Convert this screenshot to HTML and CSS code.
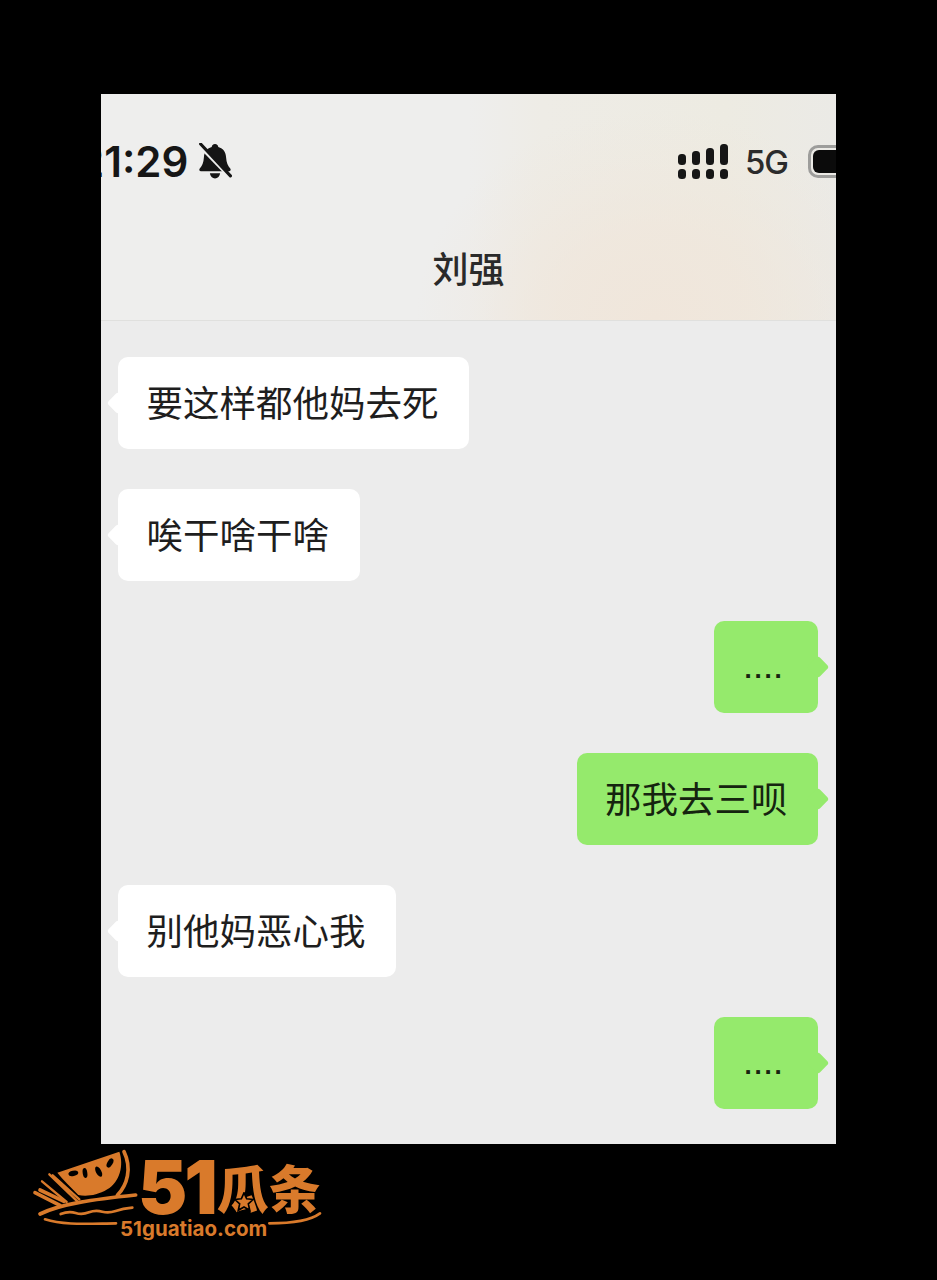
FILE: index.html
```html
<!DOCTYPE html>
<html lang="zh-CN">
<head>
<meta charset="utf-8">
<title>刘强</title>
<link rel="stylesheet" href="styles.css">
</head>
<body>
<main class="screen">
  <header class="top">
    <div class="status">
      <div class="status-left">
        <span class="time">21:29</span>
        <svg class="bell" viewBox="0 0 32 36" aria-hidden="true">
          <path class="bell-body" d="M16 1c2 0 3 1.300 3.200 3 5 1.300 7.300 5.300 7.600 10 .3 5 1.700 8 4.200 11 .7 1-.1 2.500-1.300 2.500H2.300C1 27.500.3 26 1 25c2.500-3 3.900-6 4.200-11 .3-4.700 2.600-8.700 7.600-10C13 2.300 14 1 16 1z"/>
          <path class="bell-body" d="M11 29.500h10c-.4 3-2.400 5-5 5s-4.600-2-5-5z"/>
          <path class="bell-gap" d="M1 3l31 32"/>
          <path class="bell-slash" d="M2 1l29 31"/>
        </svg>
      </div>
      <div class="status-right">
        <svg class="signal" viewBox="0 0 50 36" aria-hidden="true">
          <rect x="0" y="10" width="8" height="11" rx="3.500"/>
          <rect x="14" y="7" width="8" height="14" rx="3.500"/>
          <rect x="28" y="4" width="8" height="17" rx="3.500"/>
          <rect x="42" y="0" width="8" height="21" rx="3.500"/>
          <rect x="0" y="25" width="8" height="10" rx="3.500"/>
          <rect x="14" y="25" width="8" height="10" rx="3.500"/>
          <rect x="28" y="25" width="8" height="10" rx="3.500"/>
          <rect x="42" y="25" width="8" height="10" rx="3.500"/>
        </svg>
        <span class="net">5G</span>
        <span class="battery"><span class="battery-fill"></span></span>
      </div>
    </div>
    <h1 class="title">刘强</h1>
  </header>
  <section class="chat">
    <div class="msg in"><p class="bubble">要这样都他妈去死</p></div>
    <div class="msg in"><p class="bubble">唉干啥干啥</p></div>
    <div class="msg out"><p class="bubble dots">....</p></div>
    <div class="msg out"><p class="bubble">那我去三呗</p></div>
    <div class="msg in"><p class="bubble">别他妈恶心我</p></div>
    <div class="msg out"><p class="bubble dots">....</p></div>
  </section>
</main>
<footer class="brand">
  <svg class="brand-art" viewBox="0 0 960 330" aria-hidden="true">
    <path class="o-fill" d="M112 98L298 35C312 75 300 125 262 148C230 168 195 170 175 165C150 140 130 120 112 98Z"/>
    <ellipse class="seed" cx="160" cy="100" rx="15" ry="8" transform="rotate(-12 160 100)"/>
    <ellipse class="seed" cx="195" cy="99" rx="7" ry="15" transform="rotate(-8 195 99)"/>
    <ellipse class="seed" cx="236" cy="95" rx="8" ry="17" transform="rotate(-28 236 95)"/>
    <ellipse class="seed" cx="270" cy="69" rx="8" ry="15" transform="rotate(30 270 69)"/>
    <path class="o-line thick" d="M312 35C336 85 322 135 292 166"/>
    <path class="o-line thick" d="M60 222C120 192 220 178 347 165"/>
    <path class="o-line thin" d="M88 103L172 184M66 124L140 186M98 106L178 178"/>
    <path class="o-line thick" d="M45 158L120 196M60 150L132 184"/>
    <path class="o-line thin2" d="M122 222c20-8 30-8 45-3s25 4 40-2 25-6 40-2 25 3 40-2 30-8 50-10"/>
    <path class="o-line thin2" d="M75 238C130 256 200 251 288 250"/>
    <path class="o-line thin2" d="M748 250C805 250 865 246 900 220"/>
  </svg>
  <div class="brand-name"><span class="brand-num">51</span><span class="brand-cn">瓜条</span></div>
  <svg class="brand-star" viewBox="0 0 24 24" aria-hidden="true"><path d="M12 1l3.200 7.200 7.800.8-5.800 5.200 1.700 7.700L12 18l-6.900 3.900 1.700-7.700L1 9l7.800-.8z"/></svg>
  <div class="brand-url">51guatiao.com</div>
</footer>
</body>
</html>
```
FILE: styles.css
```css
html, body {
  margin: 0;
  padding: 0;
}
body {
  width: 937px;
  height: 1280px;
  overflow: hidden;
  background: #000;
  font-family: "Liberation Sans", "Noto Sans CJK SC", sans-serif;
  padding-top: 94px;
  box-sizing: border-box;
}
.screen {
  width: 735px;
  height: 1050px;
  margin-left: 101px;
  background: #ececec;
  overflow: hidden;
  color: #1c1c1c;
}
.top {
  height: 227px;
  border-bottom: 1px solid #e0e0de;
  box-sizing: border-box;
  background:
    radial-gradient(ellipse 240px 210px at 555px 226px, #f0e6db 0%, rgba(240, 230, 219, .75) 40%, rgba(240, 230, 219, .3) 72%, rgba(240, 230, 219, 0) 100%),
    linear-gradient(90deg, #eeeeed 0%, #eeeeed 50%, #eeecE6 60%, #edebe2 85%, #ebeae6 100%);
}
.status {
  display: flex;
  justify-content: space-between;
  align-items: center;
  height: 134px;
}
.status-left {
  display: flex;
  align-items: center;
  gap: 10px;
  margin-left: -23px;
}
.time {
  font-family: Inter, sans-serif;
  font-size: 42px;
  font-weight: 600;
  color: #161616;
}
.bell {
  width: 34px;
  height: 37px;
}
.bell-body { fill: #151515; }
.bell-gap { fill: none; stroke: #eeeeed; stroke-width: 3px; }
.bell-slash { fill: none; stroke: #151515; stroke-width: 3px; stroke-linecap: round; }
.status-right {
  display: flex;
  align-items: center;
  gap: 17px;
  margin-right: -16px;
}
.signal {
  width: 50px;
  height: 36px;
  fill: #161616;
  margin-top: 2px;
}
.net {
  font-family: Inter, "Liberation Sans", sans-serif;
  font-size: 33px;
  font-weight: 500;
  color: #2b2b2b;
  letter-spacing: -1px;
  margin-top: 2px;
}
.battery {
  display: block;
  width: 44px;
  height: 33px;
  box-sizing: border-box;
  border: 3px solid #9d9d9b;
  border-radius: 10px;
  padding: 2px;
  margin: 1px 0 0 3px;
}
.battery-fill {
  display: block;
  height: 100%;
  background: #0b0b0b;
  border-radius: 6px;
}
.title {
  margin: 0;
  text-align: center;
  font-family: "Noto Sans CJK SC", sans-serif;
  font-size: 36px;
  font-weight: 500;
  line-height: 40px;
  padding-top: 19px;
  color: #2a2a2a;
}
.chat {
  display: flex;
  flex-direction: column;
  gap: 40px;
  padding: 36px 18px 0 17px;
}
.msg {
  display: flex;
}
.msg.out {
  justify-content: flex-end;
}
.bubble {
  margin: 0;
  position: relative;
  height: 92px;
  box-sizing: border-box;
  padding: 0 30.500px 0 28.500px;
  border-radius: 10px;
  font-family: "Noto Sans CJK SC", sans-serif;
  font-size: 36.500px;
  line-height: 90px;
  color: #1e1e1e;
  background: #fff;
}
.bubble::before {
  content: "";
  position: absolute;
  top: 38px;
  left: -8px;
  width: 16px;
  height: 16px;
  background: inherit;
  border-radius: 3px;
  transform: rotate(45deg);
}
.out .bubble {
  background: #95ea6c;
  color: #15240f;
}
.out .bubble::before {
  left: auto;
  right: -8px;
}
.bubble.dots {
  width: 104px;
  padding: 0 3px 0 0;
  text-align: center;
  font-family: "Liberation Sans", sans-serif;
  font-weight: 700;
  font-size: 26px;
  letter-spacing: 2.800px;
  line-height: 97px;
}
.brand {
  position: relative;
  width: 320px;
  height: 110px;
  margin: -4px 0 0 20px;
  color: #d97a2b;
}
.brand-art {
  display: block;
  width: 320px;
  height: 110px;
}
.o-fill { fill: #d97a2b; }
.seed { fill: #000; }
.o-line { fill: none; stroke: #d97a2b; stroke-linecap: round; }
.thick { stroke-width: 11px; }
.thin { stroke-width: 7px; }
.thin2 { stroke-width: 8px; }
.brand-name {
  position: absolute;
  left: 118px;
  top: 17px;
  display: flex;
  align-items: center;
  height: 60px;
}
.brand-num {
  font-family: Inter, sans-serif;
  font-weight: 900;
  font-size: 74px;
  line-height: 60px;
  letter-spacing: -3px;
}
.brand-cn {
  font-family: "Noto Sans CJK SC", sans-serif;
  font-weight: 900;
  font-size: 52px;
  line-height: 60px;
  margin-left: 2px;
}
.brand-star {
  position: absolute;
  left: 214px;
  top: 52px;
  width: 20px;
  height: 20px;
  fill: #d97a2b;
  stroke: #000;
  stroke-width: 2px;
}
.brand-url {
  position: absolute;
  left: 100px;
  top: 78px;
  font-family: Inter, sans-serif;
  font-weight: 700;
  font-size: 20.500px;
  line-height: 22px;
  white-space: nowrap;
}
```
